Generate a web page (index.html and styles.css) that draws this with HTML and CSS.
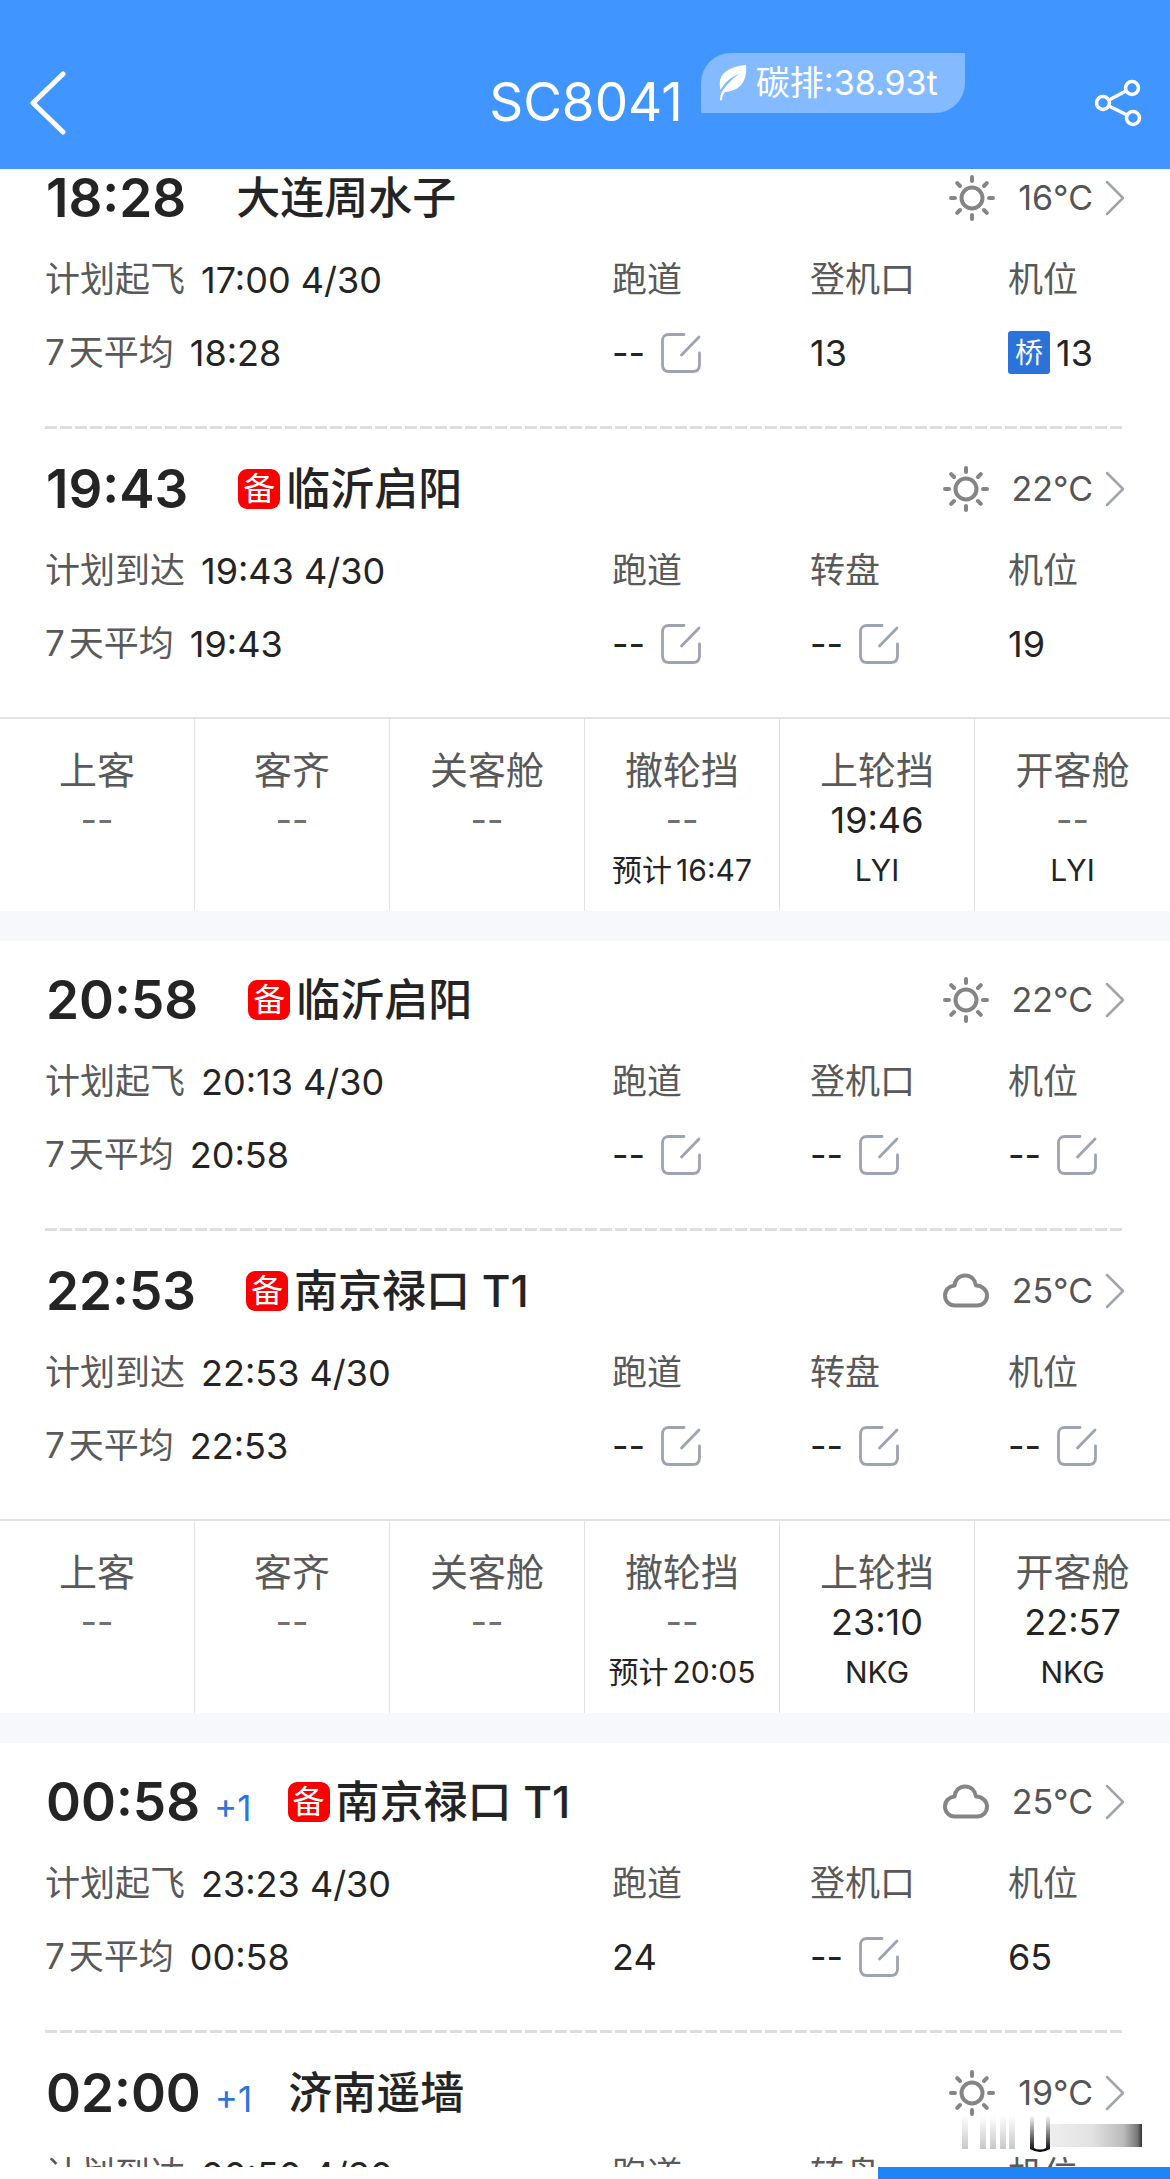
FILE: index.html
```html
<!DOCTYPE html>
<html lang="zh-CN">
<head>
<meta charset="utf-8">
<meta name="viewport" content="width=device-width, initial-scale=1">
<title>SC8041</title>
<link rel="stylesheet" href="styles.css">
</head>
<body>
<svg class="sprite" aria-hidden="true">
  <symbol id="sun" viewBox="0 0 46 46">
    <g fill="none" stroke="currentColor" stroke-width="4" stroke-linecap="round">
      <circle cx="23" cy="23" r="10.5"/>
      <path d="M23 2v4M23 40v4M2 23h4M40 23h4M8.2 8.2l2.8 2.8M35 35l2.8 2.8M8.2 37.8l2.8-2.8M35 11l2.8-2.8"/>
    </g>
  </symbol>
  <symbol id="cloud" viewBox="0 0 46 46">
    <path d="M12 37.500C6 37.500 2 33 2 27.500C2 22 6 18 11.500 17.500C12 12 16 7.500 22 7.500C28 7.500 32 11.500 33 17.500C39 17.500 44 22 44 27.500C44 33 40 37.500 34 37.500Z" fill="none" stroke="currentColor" stroke-width="4" stroke-linejoin="round"/>
  </symbol>
  <symbol id="next" viewBox="0 0 20 36">
    <path d="M2 2l16 16L2 34" fill="none" stroke="currentColor" stroke-width="2.500" stroke-linecap="round" stroke-linejoin="round"/>
  </symbol>
  <symbol id="edit" viewBox="0 0 40 40">
    <path d="M23 1.500H8Q1.500 1.500 1.500 8V32Q1.500 38.500 8 38.500H32Q38.500 38.500 38.500 32V20M38 4L20.500 22" fill="none" stroke="currentColor" stroke-width="2.800" stroke-linecap="round"/>
  </symbol>
</svg>

<header class="topbar">
  <button class="icon-button" type="button" aria-label="返回">
    <svg width="36" height="64" viewBox="0 0 36 64"><path d="M33 3L3 32l30 29" fill="none" stroke="currentColor" stroke-width="5" stroke-linecap="round" stroke-linejoin="round"/></svg>
  </button>
  <h1 class="flight">SC8041
    <span class="carbon">
      <svg width="28" height="36" viewBox="0 0 28 36"><path d="M27 0C28 12 25 25 6 27C4 29 3 32 3 35.500L1 35C1 31 2 28 4 25C8 19 13 14 20 9C12 12 6 17 1.500 25C-2 11 6 2 27 0Z" fill="currentColor"/></svg>
      碳排:38.93t
    </span>
  </h1>
  <button class="icon-button" type="button" aria-label="分享">
    <svg width="48" height="48" viewBox="0 0 48 48" fill="none" stroke="currentColor" stroke-width="3.500"><circle cx="9" cy="24" r="6.500"/><circle cx="38" cy="9" r="6.500"/><circle cx="39" cy="39" r="6.500"/><path d="M15 21l17-9M15 27l18 9"/></svg>
  </button>
</header>

<main class="schedule">
  <article class="segment segment-scrolled">
    <section class="leg">
      <div class="leg-head">
        <time class="clock">18:28</time>
        <h2 class="airport">大连周水子</h2>
        <a class="weather" href="#"><svg class="sky"><use href="#sun"/></svg>16°C<svg class="next"><use href="#next"/></svg></a>
      </div>
      <div class="details">
        <div><p><span class="label">计划起飞</span>17:00 4/30</p><p><span class="label"><span class="digit">7</span>天平均</span>18:28</p></div>
        <div><p class="label">跑道</p><p>--<button class="edit" type="button" aria-label="编辑跑道"><svg><use href="#edit"/></svg></button></p></div>
        <div><p class="label">登机口</p><p>13</p></div>
        <div><p class="label">机位</p><p><span class="bridge">桥</span>13</p></div>
      </div>
    </section>
    <section class="leg">
      <div class="leg-head">
        <time class="clock">19:43</time>
        <h2 class="airport"><span class="alternate">备</span>临沂启阳</h2>
        <a class="weather" href="#"><svg class="sky"><use href="#sun"/></svg>22°C<svg class="next"><use href="#next"/></svg></a>
      </div>
      <div class="details">
        <div><p><span class="label">计划到达</span>19:43 4/30</p><p><span class="label"><span class="digit">7</span>天平均</span>19:43</p></div>
        <div><p class="label">跑道</p><p>--<button class="edit" type="button" aria-label="编辑跑道"><svg><use href="#edit"/></svg></button></p></div>
        <div><p class="label">转盘</p><p>--<button class="edit" type="button" aria-label="编辑转盘"><svg><use href="#edit"/></svg></button></p></div>
        <div><p class="label">机位</p><p>19</p></div>
      </div>
    </section>
    <ul class="steps">
      <li><h3>上客</h3><p class="pending">--</p></li>
      <li><h3>客齐</h3><p class="pending">--</p></li>
      <li><h3>关客舱</h3><p class="pending">--</p></li>
      <li><h3>撤轮挡</h3><p class="pending">--</p><small><span class="estimate">预计</span>16:47</small></li>
      <li><h3>上轮挡</h3><p>19:46</p><small>LYI</small></li>
      <li><h3>开客舱</h3><p class="pending">--</p><small>LYI</small></li>
    </ul>
  </article>

  <article class="segment">
    <section class="leg">
      <div class="leg-head">
        <time class="clock">20:58</time>
        <h2 class="airport"><span class="alternate">备</span>临沂启阳</h2>
        <a class="weather" href="#"><svg class="sky"><use href="#sun"/></svg>22°C<svg class="next"><use href="#next"/></svg></a>
      </div>
      <div class="details">
        <div><p><span class="label">计划起飞</span>20:13 4/30</p><p><span class="label"><span class="digit">7</span>天平均</span>20:58</p></div>
        <div><p class="label">跑道</p><p>--<button class="edit" type="button" aria-label="编辑跑道"><svg><use href="#edit"/></svg></button></p></div>
        <div><p class="label">登机口</p><p>--<button class="edit" type="button" aria-label="编辑登机口"><svg><use href="#edit"/></svg></button></p></div>
        <div><p class="label">机位</p><p>--<button class="edit" type="button" aria-label="编辑机位"><svg><use href="#edit"/></svg></button></p></div>
      </div>
    </section>
    <section class="leg">
      <div class="leg-head">
        <time class="clock">22:53</time>
        <h2 class="airport"><span class="alternate">备</span>南京禄口 T1</h2>
        <a class="weather" href="#"><svg class="sky"><use href="#cloud"/></svg>25°C<svg class="next"><use href="#next"/></svg></a>
      </div>
      <div class="details">
        <div><p><span class="label">计划到达</span>22:53 4/30</p><p><span class="label"><span class="digit">7</span>天平均</span>22:53</p></div>
        <div><p class="label">跑道</p><p>--<button class="edit" type="button" aria-label="编辑跑道"><svg><use href="#edit"/></svg></button></p></div>
        <div><p class="label">转盘</p><p>--<button class="edit" type="button" aria-label="编辑转盘"><svg><use href="#edit"/></svg></button></p></div>
        <div><p class="label">机位</p><p>--<button class="edit" type="button" aria-label="编辑机位"><svg><use href="#edit"/></svg></button></p></div>
      </div>
    </section>
    <ul class="steps">
      <li><h3>上客</h3><p class="pending">--</p></li>
      <li><h3>客齐</h3><p class="pending">--</p></li>
      <li><h3>关客舱</h3><p class="pending">--</p></li>
      <li><h3>撤轮挡</h3><p class="pending">--</p><small><span class="estimate">预计</span>20:05</small></li>
      <li><h3>上轮挡</h3><p>23:10</p><small>NKG</small></li>
      <li><h3>开客舱</h3><p>22:57</p><small>NKG</small></li>
    </ul>
  </article>

  <article class="segment">
    <section class="leg">
      <div class="leg-head">
        <time class="clock">00:58</time><span class="next-day">+1</span>
        <h2 class="airport"><span class="alternate">备</span>南京禄口 T1</h2>
        <a class="weather" href="#"><svg class="sky"><use href="#cloud"/></svg>25°C<svg class="next"><use href="#next"/></svg></a>
      </div>
      <div class="details">
        <div><p><span class="label">计划起飞</span>23:23 4/30</p><p><span class="label"><span class="digit">7</span>天平均</span>00:58</p></div>
        <div><p class="label">跑道</p><p>24</p></div>
        <div><p class="label">登机口</p><p>--<button class="edit" type="button" aria-label="编辑登机口"><svg><use href="#edit"/></svg></button></p></div>
        <div><p class="label">机位</p><p>65</p></div>
      </div>
    </section>
    <section class="leg">
      <div class="leg-head">
        <time class="clock">02:00</time><span class="next-day">+1</span>
        <h2 class="airport">济南遥墙</h2>
        <a class="weather" href="#"><svg class="sky"><use href="#sun"/></svg>19°C<svg class="next"><use href="#next"/></svg></a>
      </div>
      <div class="details">
        <div><p><span class="label">计划到达</span>00:50 4/30</p></div>
        <div><p class="label">跑道</p></div>
        <div><p class="label">转盘</p></div>
        <div><p class="label">机位</p></div>
      </div>
    </section>
  </article>
</main>

<footer class="dock">
  <svg class="smear" width="190" height="38" viewBox="0 0 190 38" aria-hidden="true">
    <defs>
      <linearGradient id="fade" x2="0" y2="1"><stop offset="0" stop-color="#777" stop-opacity="0"/><stop offset="1" stop-color="#777" stop-opacity=".4"/></linearGradient>
      <linearGradient id="ink" x2="0" y2="1"><stop offset="0" stop-color="#000" stop-opacity="0"/><stop offset="1" stop-color="#000"/></linearGradient>
      <linearGradient id="tail"><stop offset="0" stop-color="#eee"/><stop offset=".45" stop-color="#e2e2e2"/><stop offset=".8" stop-color="#bbb"/><stop offset=".95" stop-color="#777"/><stop offset="1" stop-color="#333"/></linearGradient>
    </defs>
    <path d="M10 0h6v34h-6zM28 0h6v34h-6zM38 0h6v34h-6zM48 0h6v34h-6zM57 0h6v34h-6z" fill="url(#fade)"/>
    <path d="M98 9h92v23H98z" fill="url(#tail)"/>
    <path d="M78 0h4v33q6 3 12 0V0h4v34q-10 6-20 0z" fill="url(#ink)"/>
  </svg>
  <div class="progress"></div>
</footer>
</body>
</html>
```
FILE: styles.css
```css
* {
  box-sizing: border-box;
}

body {
  display: flex;
  flex-direction: column;
  height: 100vh;
  margin: 0;
  background: #fff;
  color: #242424;
  font-family: Inter, "Noto Sans CJK SC", sans-serif;
  font-size: 36px;
  line-height: 1;
}

h1, h2, h3, p, ul {
  margin: 0;
  padding: 0;
}

button {
  padding: 0;
  border: 0;
  background: none;
  color: inherit;
  font: inherit;
}

svg {
  display: block;
  flex: none;
}

.sprite {
  position: absolute;
  width: 0;
  height: 0;
}

.topbar {
  display: flex;
  flex: none;
  align-items: center;
  justify-content: space-between;
  height: 169px;
  padding: 36px 28px 0 30px;
  background: #4096fe;
  color: #fff;
}

.icon-button {
  width: 48px;
}

.flight {
  position: relative;
  font-size: 53px;
  font-weight: 400;
}

.carbon {
  position: absolute;
  bottom: 16px;
  left: 100%;
  display: flex;
  align-items: center;
  gap: 9px;
  height: 60px;
  margin-left: 18px;
  padding: 0 27px 0 18px;
  border-radius: 30px 0;
  background: #84baff;
  font-size: 34px;
  white-space: nowrap;
}

.schedule {
  flex: 1;
  min-height: 0;
  overflow: hidden;
  background: #f6f8fb;
}

.segment {
  margin-bottom: 30px;
  background: #fff;
}

.leg {
  padding: 27px 45px 37px;
}

/* the first segment sits partly under the top bar */
.segment-scrolled .leg:first-child {
  margin-top: -3px;
  padding-top: 0;
}

.leg + .leg::before {
  display: block;
  height: 3px;
  margin: -30px 0 28px;
  background: repeating-linear-gradient(90deg, #dedede 0 12px, transparent 12px 15px);
  content: "";
}

.leg + .leg {
  padding-top: 30px;
}

.leg-head {
  display: flex;
  align-items: center;
  height: 64px;
}

.clock {
  margin-left: 1px;
  font-size: 53px;
  font-weight: 600;
}

.next-day {
  align-self: flex-end;
  margin: 0 -14px 8px 14px;
  color: #2d75dc;
  font-size: 35px;
}

.airport {
  display: flex;
  align-items: center;
  margin-left: 50px;
  font-size: 44px;
  font-weight: 500;
  white-space: pre;
}

.alternate {
  display: grid;
  place-items: center;
  width: 42px;
  height: 40px;
  margin-right: 6px;
  border-radius: 9px;
  background: #fa0000;
  color: #fff;
  font-size: 32px;
  font-weight: 400;
}

.weather {
  display: flex;
  align-items: center;
  margin-left: auto;
  color: #555;
  font-size: 34px;
  text-decoration: none;
}

.sky {
  width: 46px;
  height: 46px;
  margin-right: 23px;
  color: #858585;
}

.next {
  width: 20px;
  height: 36px;
  margin-left: 12px;
  color: #a0a4ae;
}

.details {
  display: grid;
  grid-template-columns: 567fr 198fr 198fr 117fr;
  margin-top: 13px;
}

.details p {
  display: flex;
  align-items: center;
  height: 73px;
  white-space: nowrap;
}

.label,
.details .label {
  color: #595959;
  font-size: 35px;
}

span.label {
  margin-right: 16px;
}

.digit {
  margin-right: 4px;
}

.edit {
  margin-left: 16px;
  color: #9da3b3;
}

.edit svg {
  width: 40px;
  height: 40px;
}

.bridge {
  display: grid;
  place-items: center;
  width: 42px;
  height: 43px;
  margin-right: 6px;
  border-radius: 3px;
  background: #2b72d9;
  color: #fff;
  font-size: 28px;
}

.steps {
  display: grid;
  grid-template-columns: repeat(6, 1fr);
  height: 194px;
  border-top: 2px solid #e2e2e2;
  list-style: none;
}

.steps li {
  display: flex;
  flex-direction: column;
  align-items: center;
  padding-top: 26px;
  border-right: 1px solid #e2e2e2;
  line-height: 50px;
}

.steps li:last-child {
  border-right: 0;
}

.steps h3 {
  color: #595959;
  font-size: 38px;
  font-weight: 400;
}

.steps .pending {
  color: #707070;
}

.steps small {
  font-size: 30px;
}

.estimate {
  margin-right: 4px;
}

.dock {
  position: relative;
  flex: none;
  background: #fff;
}

.smear {
  position: absolute;
  right: 28px;
  bottom: 26px;
}

.progress {
  width: 25%;
  height: 12px;
  margin-left: auto;
  background: #2084f8;
}
```
